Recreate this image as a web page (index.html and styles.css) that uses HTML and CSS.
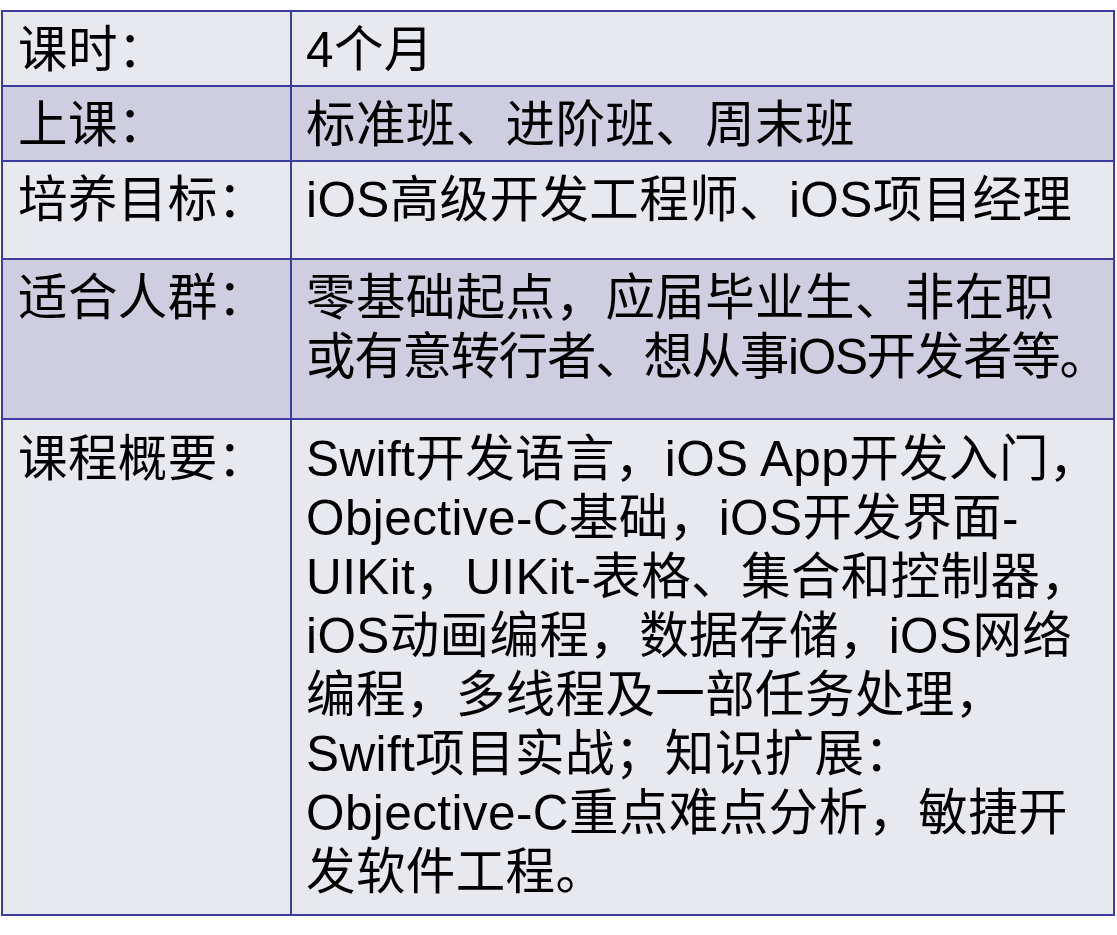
FILE: index.html
```html
<!DOCTYPE html>
<html lang="zh">
<head>
<meta charset="utf-8">
<title>iOS课程</title>
<link rel="stylesheet" href="styles.css">
</head>
<body>
<div class="table">
  <div class="row row-1 light">
    <div class="cell label">课时：</div>
    <div class="cell value">4个月</div>
  </div>
  <div class="row row-2 dark">
    <div class="cell label">上课：</div>
    <div class="cell value">标准班、进阶班、周末班</div>
  </div>
  <div class="row row-3 light">
    <div class="cell label">培养目标：</div>
    <div class="cell value">iOS高级开发工程师、iOS项目经理</div>
  </div>
  <div class="row row-4 dark">
    <div class="cell label">适合人群：</div>
    <div class="cell value">零基础起点，应届毕业生、非在职<br><span class="fit">或有意转行者、想从事iOS开发者等。</span></div>
  </div>
  <div class="row row-5 light">
    <div class="cell label">课程概要：</div>
    <div class="cell value">Swift开发语言，iOS App开发入门，<br>Objective-C基础，iOS开发界面-<br>UIKit，UIKit-表格、集合和控制器，<br>iOS动画编程，数据存储，iOS网络<br>编程，多线程及一部任务处理，<br>Swift项目实战；知识扩展：<br>Objective-C重点难点分析，敏捷开<br>发软件工程。</div>
  </div>
</div>
</body>
</html>
```
FILE: styles.css
```css
html, body {
  margin: 0;
  padding: 0;
  background: #ffffff;
}

body {
  font-family: "Liberation Sans", "Noto Sans CJK SC", sans-serif;
  color: #000000;
}

.table {
  margin: 10px 0 0 1px;
  width: 1110px;
  border: 2px solid #3c3c9e;
}

.row {
  display: grid;
  grid-template-columns: 289px 1fr;
  border-top: 2px solid #3c3c9e;
}

.row-1 { border-top: none; height: 73px; }
.row-2 { height: 73px; }
.row-3 { height: 96px; }
.row-4 { height: 158px; }
.row-5 { height: 494px; }

.light { background: #e8e9ef; }
.dark { background: #cfcee0; }

.cell {
  font-size: 49.5px;
  line-height: 59px;
  letter-spacing: 0.4px;
  padding: 8px 0 0 15px;
  white-space: nowrap;
  min-width: 0;
}

.label {
  border-right: 2px solid #3c3c9e;
}

.value {
  padding-left: 14px;
}

.fit {
  letter-spacing: -1.3px;
}

.row-5 .cell {
  padding-top: 9px;
}
```
